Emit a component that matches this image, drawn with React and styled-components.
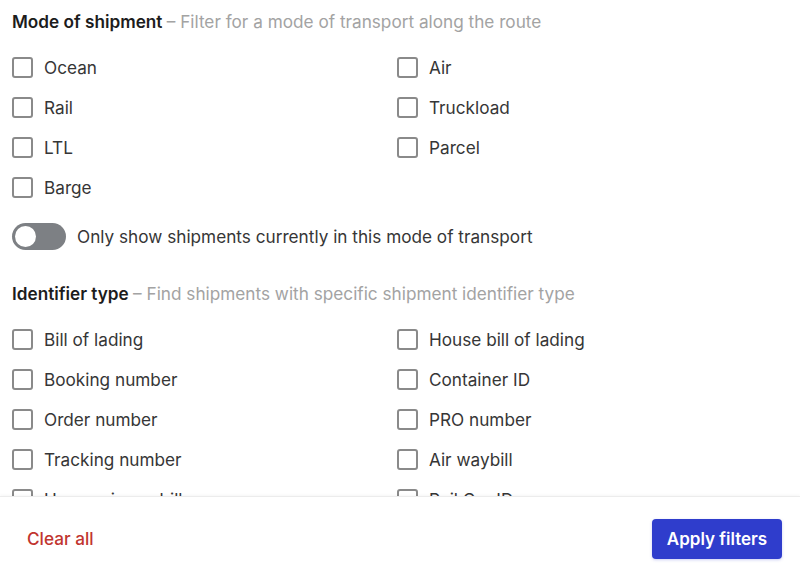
import React from "react";
import styled, { createGlobalStyle } from "styled-components";

const GlobalStyle = createGlobalStyle`
  html, body {
    margin: 0;
    padding: 0;
    background: #ffffff;
    font-family: Inter, "Noto Sans", "Liberation Sans", sans-serif;
  }
`;

const modes = [
  ["Ocean", "Air"],
  ["Rail", "Truckload"],
  ["LTL", "Parcel"],
  ["Barge", null],
];

const identifiers = [
  ["Bill of lading", "House bill of lading"],
  ["Booking number", "Container ID"],
  ["Order number", "PRO number"],
  ["Tracking number", "Air waybill"],
  ["House air waybill", "Rail Car ID"],
];

const Panel = styled.div`
  width: 800px;
  height: 580px;
  display: flex;
  flex-direction: column;
  background: #fff;
  overflow: hidden;
`;

const Body = styled.div`
  flex: 1;
  overflow: hidden;
  padding: 10px 12px 0;
`;

const Section = styled.section`
  margin-top: ${(p) => p.$top || 0}px;
`;

const Heading = styled.div`
  font-size: 17.2px;
  line-height: 24px;
  color: #1c1c1c;
  font-weight: 600;
  margin-bottom: 13px;
  white-space: nowrap;

  span {
    font-weight: 400;
    color: #a3a3a3;
  }
`;

const Grid = styled.div`
  display: grid;
  grid-template-columns: 385px 1fr;
`;

const Option = styled.label`
  display: flex;
  align-items: center;
  gap: 11px;
  height: 40px;
  font-size: 17.2px;
  color: #363636;
  cursor: pointer;
`;

const Box = styled.span`
  width: 21px;
  height: 21px;
  box-sizing: border-box;
  border: 2px solid #8a8a8a;
  border-radius: 3px;
  flex-shrink: 0;
`;

const ToggleRow = styled.div`
  display: flex;
  align-items: center;
  gap: 11px;
  height: 28px;
  margin-top: 15px;
  font-size: 17.2px;
  color: #363636;
`;

const Track = styled.span`
  width: 54px;
  height: 27px;
  border-radius: 14px;
  background: #7d8084;
  display: flex;
  align-items: center;
  padding-left: 3px;
  box-sizing: border-box;
  flex-shrink: 0;
`;

const Knob = styled.span`
  width: 21px;
  height: 21px;
  border-radius: 50%;
  background: #fff;
`;

const Footer = styled.footer`
  height: 84px;
  flex-shrink: 0;
  border-top: 1px solid #ececec;
  box-shadow: 0 -1px 3px rgba(0, 0, 0, 0.04);
  display: flex;
  align-items: center;
  justify-content: space-between;
  padding: 0 18px 0 27px;
  box-sizing: border-box;
`;

const ClearButton = styled.button`
  border: none;
  background: none;
  padding: 0;
  font-family: inherit;
  font-size: 17.2px;
  font-weight: 500;
  color: #c1352f;
  cursor: pointer;
`;

const ApplyButton = styled.button`
  width: 130px;
  height: 40px;
  border: none;
  border-radius: 4px;
  background: #2f3dcc;
  color: #fff;
  font-family: inherit;
  font-size: 17px;
  font-weight: 600;
  box-shadow: 0 1px 3px rgba(47, 61, 204, 0.25);
  cursor: pointer;
`;

const Checks = ({ rows }) => (
  <Grid>
    {rows.flat().map((label, i) =>
      label ? (
        <Option key={i}>
          <Box />
          {label}
        </Option>
      ) : (
        <div key={i} />
      )
    )}
  </Grid>
);

export default function App() {
  return (
    <Panel>
      <GlobalStyle />
      <Body>
        <Section>
          <Heading>
            Mode of shipment <span>– Filter for a mode of transport along the route</span>
          </Heading>
          <Checks rows={modes} />
          <ToggleRow>
            <Track>
              <Knob />
            </Track>
            Only show shipments currently in this mode of transport
          </ToggleRow>
        </Section>
        <Section $top={32}>
          <Heading>
            Identifier type <span>– Find shipments with specific shipment identifier type</span>
          </Heading>
          <Checks rows={identifiers} />
        </Section>
      </Body>
      <Footer>
        <ClearButton>Clear all</ClearButton>
        <ApplyButton>Apply filters</ApplyButton>
      </Footer>
    </Panel>
  );
}
